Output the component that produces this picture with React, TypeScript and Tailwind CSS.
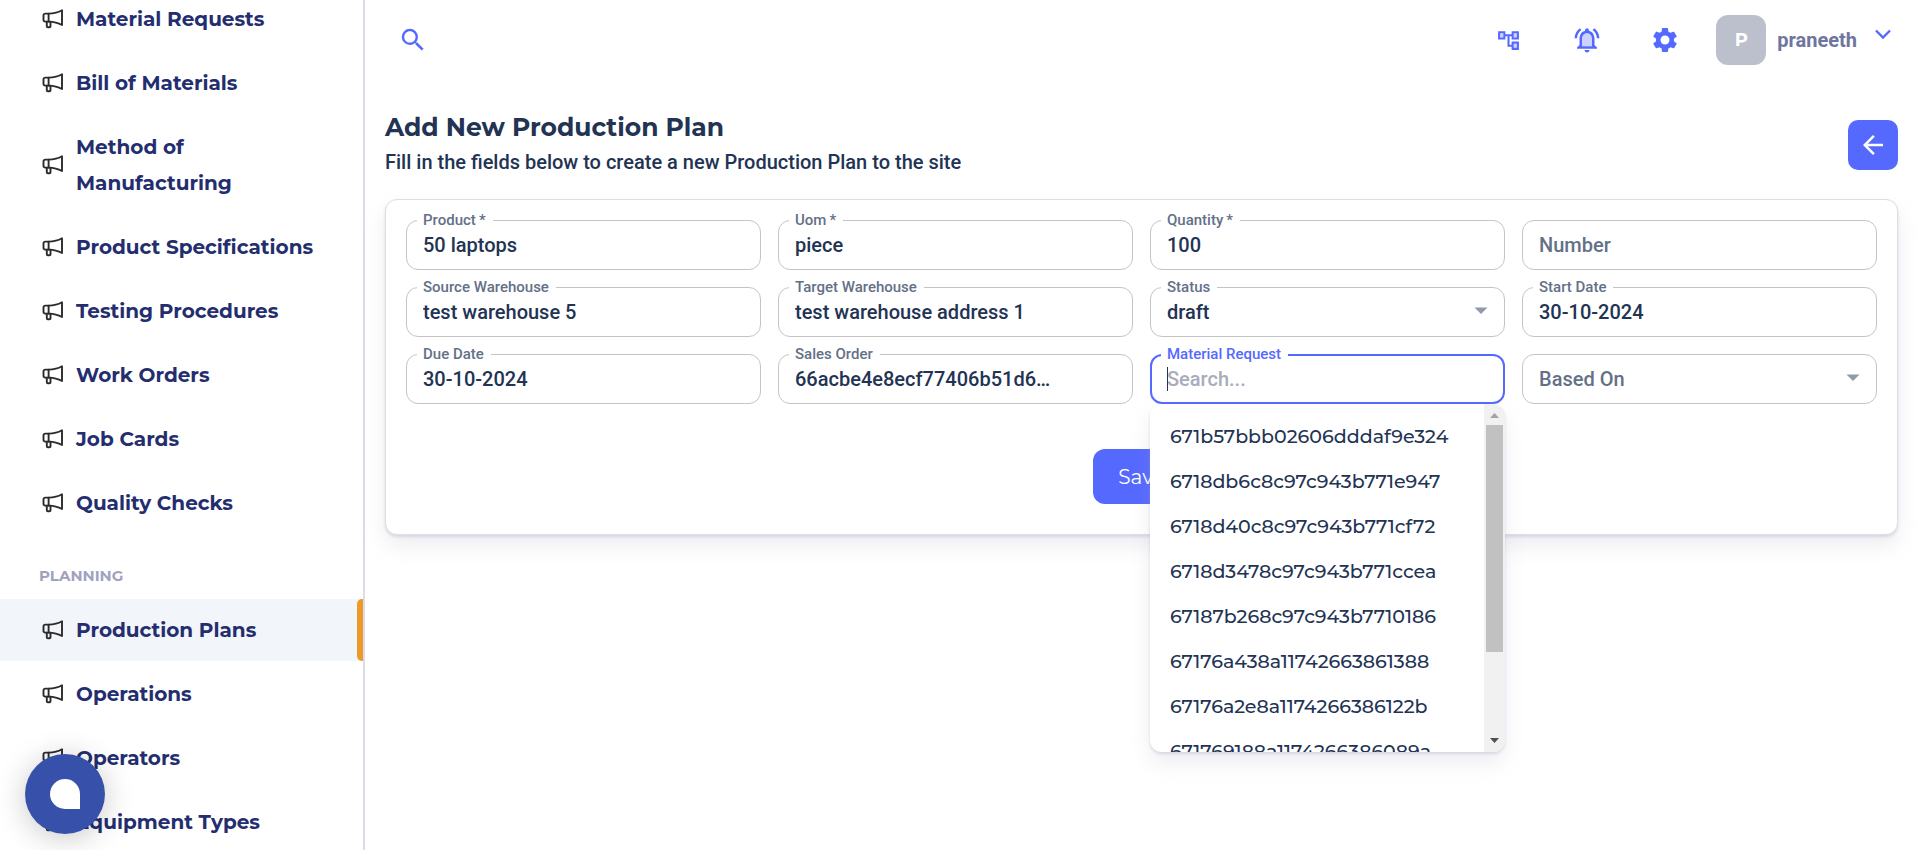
import React from "react";
import { MdSettings } from "react-icons/md";

const mainNav = [
  "Material Requests",
  "Bill of Materials",
  "Method of Manufacturing",
  "Product Specifications",
  "Testing Procedures",
  "Work Orders",
  "Job Cards",
  "Quality Checks",
];
const planningNav = ["Production Plans", "Operations", "Operators", "Equipment Types"];

const requests = [
  "671b57bbb02606dddaf9e324",
  "6718db6c8c97c943b771e947",
  "6718d40c8c97c943b771cf72",
  "6718d3478c97c943b771ccea",
  "67187b268c97c943b7710186",
  "67176a438a11742663861388",
  "67176a2e8a1174266386122b",
  "671769188a1174266386089a",
];

function Megaphone() {
  return (
    <svg className="h-5 w-[22px] shrink-0" viewBox="0 0 22 20" fill="none" stroke="#2b2b2b" strokeWidth="1.9" strokeLinejoin="round" strokeLinecap="round" aria-hidden="true">
      <path d="M6.600 4.600H3.200A1.700 1.700 0 0 0 1.500 6.300v4.600a1.700 1.700 0 0 0 1.700 1.700h3.400z" />
      <path d="M6.600 4.600C12 4.600 16.500 3.400 20 1.300v14.700c-3.500-2-8-3.300-13.400-3.400" />
      <path d="M4.800 12.600v4.600a1 1 0 0 0 1 1h1.700a1 1 0 0 0 1-1v-4.600" />
    </svg>
  );
}

function NavItem({ label, active }: { label: string; active?: boolean }) {
  return (
    <li className={active ? "flex justify-between bg-[#f2f5f9]" : "flex justify-between"}>
      <a href="#" aria-current={active ? "page" : undefined} className="flex w-full items-center gap-3 py-[13px] pl-[42px] pr-8 text-[20px] leading-[36px] font-bold text-[#242e6f]">
        <Megaphone />
        <span>{label}</span>
      </a>
      {active && <span className="w-[6px] shrink-0 rounded-l-[5px] bg-[#ed9b26]" />}
    </li>
  );
}

const boxBase = "h-[50px] w-full rounded-[12px] bg-transparent font-medium text-[20px] text-[#223354] outline-none";
const labelBase = "absolute -top-[10px] left-[11px] bg-white pr-[7px] pl-[6px] text-[15px] leading-5 font-medium";

const toId = (label: string) => label.toLowerCase().replace(/[^a-z]+/g, "-");

function Field({ label, value, focused, children }: { label: string; value?: string; focused?: boolean; children?: React.ReactNode }) {
  const id = toId(label);
  return (
    <div className="relative">
      <label htmlFor={id} className={labelBase + (focused ? " text-[#5569ff]" : " text-[#647087]")}>
        {label}
      </label>
      <input
        id={id}
        defaultValue={value}
        placeholder={focused ? "Search..." : undefined}
        className={boxBase + (focused ? " border-2 border-[#5569ff] px-[15px] placeholder:text-[#a7adbb]" : " border border-[#c4c4c4] px-4")}
      />
      {children}
    </div>
  );
}

function SelectField({ label, value }: { label: string; value?: string }) {
  const id = toId(label);
  return (
    <div className="relative">
      {value && (
        <label htmlFor={id} className={labelBase + " text-[#647087]"}>
          {label}
        </label>
      )}
      <select id={id} aria-label={label} className={boxBase + " appearance-none border border-[#c4c4c4] px-4" + (value ? "" : " text-[#647087]!")}>
        <option>{value ?? label}</option>
      </select>
      <svg className="pointer-events-none absolute top-5 right-[17px] h-2 w-[14px]" viewBox="0 0 14 8" aria-hidden="true">
        <path d="M0.500 0.500h13L7 7z" fill="#909aaa" />
      </svg>
    </div>
  );
}

export default function App() {
  return (
    <div className="flex min-h-screen bg-white font-['Montserrat','Open_Sans',sans-serif] text-[#223354]">
      <aside className="sticky top-0 h-screen w-[365px] shrink-0 overflow-hidden border-r-2 border-[#dcdce8] bg-white">
        <nav className="-mt-3">
          <ul className="flex flex-col gap-[2px]">
            {mainNav.map((n) => (
              <NavItem key={n} label={n} />
            ))}
          </ul>
          <h2 className="mt-7 mb-[9px] pl-[39px] text-[15px] leading-7 font-bold text-[#9fa2bf]">PLANNING</h2>
          <ul className="flex flex-col gap-[2px]">
            {planningNav.map((n, i) => (
              <NavItem key={n} label={n} active={i === 0} />
            ))}
          </ul>
        </nav>
      </aside>

      <div className="min-w-0 flex-1 font-['Roboto',sans-serif]">
        <header className="flex h-20 items-center justify-between pr-[25px] pl-[33px] text-[#5569ff]">
          <button aria-label="Search">
            <svg className="size-[30px]" viewBox="0 0 24 24" fill="currentColor">
              <path d="M15.500 14h-.79l-.28-.27A6.471 6.471 0 0 0 16 9.500 6.500 6.500 0 1 0 9.500 16c1.610 0 3.090-.59 4.230-1.570l.27.28v.79l5 4.990L20.490 19l-4.990-5zm-6 0C7.010 14 5 11.990 5 9.500S7.010 5 9.500 5 14 7.010 14 9.500 11.990 14 9.500 14z" />
            </svg>
          </button>
          <div className="flex items-center">
            <button aria-label="Hierarchy" className="mr-[51px]">
              <svg className="size-[25px]" viewBox="0 0 24 24" fill="currentColor">
                <path opacity=".3" d="M4 5h3v4H4zM17 5h3v4h-3zM17 15h3v4h-3z" />
                <path d="M22 11V3h-7v3H9V3H2v8h7V8h2v10h4v3h7v-8h-7v3h-2V8h2v3h7zM7 9H4V5h3v4zm10 6h3v4h-3v-4zm0-10h3v4h-3V5z" />
              </svg>
            </button>
            <button aria-label="Notifications" className="mr-12">
              <svg className="size-[30px]" viewBox="0 0 24 24" fill="currentColor">
                <path opacity=".3" d="M12 6.500c-2.490 0-4 2.020-4 4.500v6h8v-6c0-2.480-1.510-4.500-4-4.500z" />
                <path d="M12 22c1.100 0 2-.9 2-2h-4c0 1.100.9 2 2 2zm6-11c0-3.070-1.630-5.640-4.500-6.320V4c0-.83-.67-1.500-1.500-1.500s-1.500.67-1.500 1.500v.68C7.640 5.360 6 7.920 6 11v5l-2 2v1h16v-1l-2-2v-5zm-2 6H8v-6c0-2.480 1.510-4.500 4-4.500s4 2.020 4 4.500v6zM7.580 4.080 6.150 2.650C3.750 4.480 2.170 7.300 2.030 10.500h2c.15-2.650 1.510-4.970 3.550-6.420zm12.390 6.420h2c-.15-3.200-1.730-6.020-4.120-7.850l-1.420 1.430c2.020 1.450 3.390 3.770 3.540 6.420z" />
              </svg>
            </button>
            <button aria-label="Settings" className="mr-9">
              <MdSettings className="size-[30px]" />
            </button>
            <button className="flex items-center">
              <span className="flex size-[50px] items-center justify-center rounded-[12px] bg-[#bcc0cc] font-['Montserrat',sans-serif] text-[18px] font-bold text-white">P</span>
              <span className="pl-[11px] text-[20px] font-bold text-[#6e759f]">praneeth</span>
              <svg className="mb-3 ml-[14px] size-[24px]" viewBox="0 0 24 24" fill="none" stroke="currentColor" strokeWidth="2.400" aria-hidden="true">
                <path d="M5 8.500l7 7 7-7" />
              </svg>
            </button>
          </div>
        </header>

        <main className="pr-[22px] pl-5">
          <div className="flex items-start justify-between">
            <div className="pt-[30px]">
              <h1 className="font-['Montserrat',sans-serif] text-[25px] leading-[34px] font-bold">Add New Production Plan</h1>
              <p className="text-[20px] leading-[36px] font-medium">Fill in the fields below to create a new Production Plan to the site</p>
            </div>
            <button aria-label="Back" className="mt-10 flex size-[50px] items-center justify-center rounded-[10px] bg-[#5569ff] text-white">
              <svg className="size-[30px]" viewBox="0 0 24 24" fill="currentColor">
                <path d="M20 11H7.830l5.590-5.590L12 4l-8 8 8 8 1.410-1.410L7.830 13H20v-2z" />
              </svg>
            </button>
          </div>

          <form className="mt-[19px] rounded-[12px] border border-[#dedee4] bg-white px-5 pt-5 pb-[30px] shadow-[0_11px_20px_rgba(159,162,191,0.18),0_2px_3px_rgba(159,162,191,0.32)]">
            <div className="grid grid-cols-4 gap-[17px]">
              <Field label={"Product\u2009*"} value="50 laptops" />
              <Field label={"Uom\u2009*"} value="piece" />
              <Field label={"Quantity\u2009*"} value="100" />
              <input aria-label="Number" placeholder="Number" className={boxBase + " border border-[#c4c4c4] px-4 placeholder:text-[#647087]"} />
              <Field label="Source Warehouse" value="test warehouse 5" />
              <Field label="Target Warehouse" value="test warehouse address 1" />
              <SelectField label="Status" value="draft" />
              <Field label="Start Date" value="30-10-2024" />
              <Field label="Due Date" value="30-10-2024" />
              <Field label="Sales Order" value="66acbe4e8ecf77406b51d6…" />
              <Field label="Material Request" focused>
                <span className="absolute top-[13px] left-[17px] h-6 w-px bg-[#223354]" />
                <div className="absolute top-[50px] right-0 left-0 z-10 flex h-[348px] overflow-hidden rounded-[12px] bg-white shadow-[0_11px_20px_rgba(159,162,191,0.18),0_2px_3px_rgba(159,162,191,0.32)]">
                  <ul role="listbox" aria-label="Material requests" className="flex-1 pt-[10px] font-['Montserrat',sans-serif] text-[19px] font-medium">
                    {requests.map((r) => (
                      <li key={r} role="option" aria-selected="false" className="h-[45px] pl-5 leading-[45px]">
                        {r}
                      </li>
                    ))}
                  </ul>
                  <div className="flex w-[21px] flex-col items-center bg-[#f1f1f1]">
                    <svg className="h-[21px] w-[9px] shrink-0" viewBox="0 0 9 21" aria-hidden="true">
                      <path d="M0 14h9L4.500 9z" fill="#a3a3a3" />
                    </svg>
                    <div className="h-[227px] w-[17px] bg-[#c1c1c1]" />
                    <svg className="mt-auto h-[21px] w-[9px] shrink-0" viewBox="0 0 9 21" aria-hidden="true">
                      <path d="M0 7h9L4.500 12z" fill="#505050" />
                    </svg>
                  </div>
                </div>
              </Field>
              <SelectField label="Based On" />
            </div>
            <div className="mt-[45px] flex justify-center">
              <button type="button" className="h-[55px] rounded-[12px] bg-[#5569ff] px-[25px] font-['Montserrat',sans-serif] text-[20px] text-white">Save</button>
            </div>
          </form>
        </main>
      </div>

      <button aria-label="Open chat" className="fixed bottom-4 left-[25px] flex size-20 items-center justify-center rounded-full bg-[#3751aa] shadow-[0_4px_30px_rgba(0,0,0,0.22)]">
        <span className="size-[30px] rounded-full rounded-br-none bg-white" />
      </button>
    </div>
  );
}
